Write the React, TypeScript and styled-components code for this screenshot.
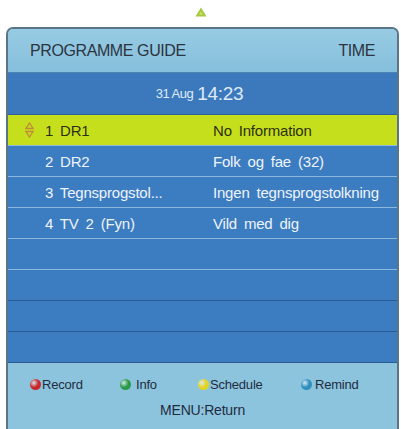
import React from 'react';
import styled, { createGlobalStyle } from 'styled-components';

const GlobalStyle = createGlobalStyle`
  html, body {
    margin: 0;
    padding: 0;
    background: #ffffff;
    font-family: 'Liberation Sans', Arial, sans-serif;
  }
`;

const Page = styled.div`
  width: 401px;
  height: 429px;
  overflow: hidden;
  background: #ffffff;
`;

const ArrowBar = styled.div`
  height: 27px;
  display: flex;
  justify-content: center;
  padding-top: 7px;
  box-sizing: border-box;
`;

const Panel = styled.div`
  margin-left: 6px;
  width: 393px;
  box-sizing: border-box;
  border: 2px solid #5b7588;
  border-bottom: none;
  border-radius: 7px 7px 0 0;
  overflow: hidden;
  background: #8dc3dd;
`;

const Header = styled.div`
  height: 43px;
  display: flex;
  align-items: center;
  justify-content: space-between;
  padding: 0 22px 0 22px;
  background: linear-gradient(#97cbe3, #86bfdc);
  border-bottom: 1px solid #4d83b3;
  color: #2c3440;
  font-size: 16px;
  letter-spacing: -0.4px;
`;

const DateRow = styled.div`
  height: 41px;
  display: flex;
  align-items: center;
  justify-content: center;
  gap: 4px;
  padding-right: 6px;
  background: #3b79bc;
  border-bottom: 1px solid #2e5f97;
  color: #dfeaf7;
`;

const DateSmall = styled.span`
  font-size: 13px;
  letter-spacing: -0.5px;
`;

const TimeBig = styled.span`
  font-size: 19px;
  letter-spacing: -0.3px;
`;

const List = styled.div`
  display: flex;
  flex-direction: column;
`;

const Row = styled.div<{ $active?: boolean; $dark?: boolean }>`
  height: 31px;
  box-sizing: border-box;
  display: grid;
  grid-template-columns: 37px 168px 1fr;
  align-items: center;
  background: ${(p) => (p.$active ? '#c6df1c' : '#3c7cc0')};
  border-bottom: 1px solid ${(p) => (p.$dark ? '#2b5a90' : '#8cb8de')};
  color: ${(p) => (p.$active ? '#2d3010' : '#eef4fc')};
  font-size: 15px;
  letter-spacing: -0.2px;
  word-spacing: 3px;
  white-space: nowrap;
`;

const Marker = styled.div`
  display: flex;
  justify-content: center;
  padding-left: 6px;
`;

const Footer = styled.div`
  height: 70px;
  background: #8cc4de;
  display: flex;
  flex-direction: column;
  align-items: center;
  padding-top: 14px;
  box-sizing: border-box;
  color: #1f2c40;
`;

const Legend = styled.div`
  width: 100%;
  display: grid;
  grid-template-columns: 90px 78px 103px 1fr;
  padding-left: 22px;
  box-sizing: border-box;
  font-size: 13px;
  letter-spacing: -0.2px;
`;

const LegendItem = styled.div`
  display: flex;
  align-items: center;
  gap: 1px;
`;

const Dot = styled.span<{ $color: string; $gap?: number }>`
  width: 11px;
  height: 11px;
  border-radius: 50%;
  margin-right: ${(p) => p.$gap ?? 0}px;
  background: radial-gradient(circle at 35% 35%, #ffffffaa 0, ${(p) => p.$color} 45%, ${(p) => p.$color} 100%);
`;

const MenuText = styled.div`
  margin-top: 10px;
  font-size: 14px;
  letter-spacing: -0.2px;
`;

const UpTriangle = () => (
  <svg width="12" height="10" viewBox="0 0 12 10">
    <path d="M6 0.5 L11.5 9.5 L0.5 9.5 Z" fill="#a4c83a" />
    <path d="M6 4 L8.2 8 L3.8 8 Z" fill="#c4dc6a" />
  </svg>
);

const UpDown = () => (
  <svg width="9" height="16" viewBox="0 0 9 16">
    <path d="M4.5 1 L8 6.5 L1 6.5 Z" fill="none" stroke="#c18a3a" strokeWidth="1.3" />
    <path d="M4.5 15 L8 9.5 L1 9.5 Z" fill="none" stroke="#c18a3a" strokeWidth="1.3" />
  </svg>
);

const channels = [
  { ch: '1 DR1', prog: 'No Information' },
  { ch: '2 DR2', prog: 'Folk og fae (32)' },
  { ch: '3 Tegnsprogstol...', prog: 'Ingen tegnsprogstolkning' },
  { ch: '4 TV 2 (Fyn)', prog: 'Vild med dig' },
];

export default function App() {
  const rows = Array.from({ length: 8 }, (_, i) => channels[i]);
  return (
    <Page>
      <GlobalStyle />
      <ArrowBar>
        <UpTriangle />
      </ArrowBar>
      <Panel>
        <Header>
          <span>PROGRAMME GUIDE</span>
          <span>TIME</span>
        </Header>
        <DateRow>
          <DateSmall>31 Aug</DateSmall>
          <TimeBig>14:23</TimeBig>
        </DateRow>
        <List>
          {rows.map((r, i) => (
            <Row key={i} $active={i === 0} $dark={i >= 5}>
              <Marker>{i === 0 && <UpDown />}</Marker>
              <span>{r?.ch ?? ''}</span>
              <span>{r?.prog ?? ''}</span>
            </Row>
          ))}
        </List>
        <Footer>
          <Legend>
            <LegendItem>
              <Dot $color="#c8282c" />
              Record
            </LegendItem>
            <LegendItem>
              <Dot $color="#2a9a48" $gap={4} />
              Info
            </LegendItem>
            <LegendItem>
              <Dot $color="#e2d420" />
              Schedule
            </LegendItem>
            <LegendItem>
              <Dot $color="#2f8fbf" $gap={2} />
              Remind
            </LegendItem>
          </Legend>
          <MenuText>MENU:Return</MenuText>
        </Footer>
      </Panel>
    </Page>
  );
}
